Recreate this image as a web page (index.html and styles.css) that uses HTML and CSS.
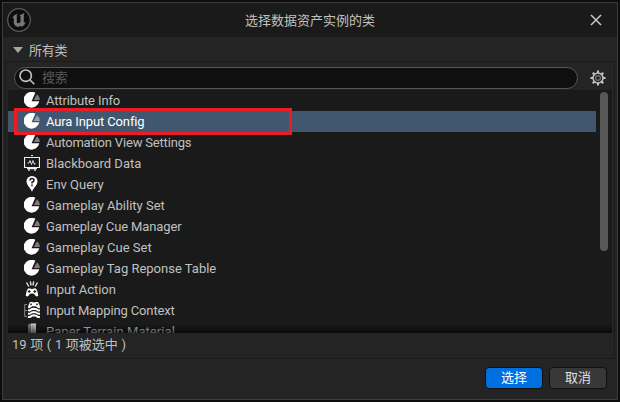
FILE: index.html
```html
<!DOCTYPE html>
<html lang="zh-CN">
<head>
<meta charset="utf-8">
<title>选择数据资产实例的类</title>
<link rel="stylesheet" href="styles.css">
</head>
<body>
<svg class="defs" width="0" height="0">
  <symbol id="pie" viewBox="0 0 16 16">
    <path d="M11.300 .8A7.900 7.900 0 1 0 15.300 9.300H7.600Z" fill="#fff"/>
    <path d="M13 2.300Q15.500 4.300 15.900 8H9.800Z" fill="currentColor"/>
  </symbol>
</svg>
<div class="window">
  <header class="titlebar">
    <svg class="logo" viewBox="0 0 24 24">
      <circle cx="12" cy="12" r="11.300" fill="#0c0c0c" stroke="#5c5c5c" stroke-width="1.200"/>
      <path d="M5 10Q7 6.500 10.500 5.500L9.800 7V14.500Q10.500 15.500 12 15L13.500 14V8.200L12.500 7.300Q15 6.500 17.500 4.800L16.800 7V14L18 14.700L19 14Q17.500 17.500 14.500 19L13.300 17.700L11.500 19Q7.500 18.500 6.800 15V10Q6.300 9.300 5 10Z" fill="#777"/>
    </svg>
    <h1 class="title">选择数据资产实例的类</h1>
    <svg class="close" viewBox="0 0 12 12"><path d="M1 1L11 11M11 1L1 11" stroke="#c8c8c8" stroke-width="1.500"/></svg>
  </header>
  <div class="section">
    <svg class="arrow" viewBox="0 0 10 6"><path d="M0 0H10L5 6Z" fill="#a5a5a5"/></svg>
    <span>所有类</span>
  </div>
  <main class="panel">
    <div class="toolbar">
      <div class="search">
        <svg class="lens" viewBox="0 0 16 16" fill="none" stroke="#c4c4c4" stroke-width="1.600"><circle cx="6.700" cy="6.700" r="5.700"/><path d="M10.800 10.800L15.300 15.300"/></svg>
        <span>搜索</span>
      </div>
      <svg class="gear" viewBox="0 0 16 16" fill="none" stroke="#c4c4c4">
        <circle cx="8" cy="8" r="5" stroke-width="1.500"/>
        <circle cx="8" cy="8" r="2.400" stroke="#777" stroke-width="1.200"/>
        <path d="M8 .5V3M8 13V15.500M.5 8H3M13 8H15.500M2.700 2.700L4.500 4.500M11.500 11.500L13.300 13.300M2.700 13.300L4.500 11.500M11.500 4.500L13.300 2.700" stroke-width="2"/>
      </svg>
    </div>
    <div class="list">
      <div class="row"><svg class="icon"><use href="#pie"/></svg><span class="tight">Attribute Info</span></div>
      <div class="row selected"><svg class="icon"><use href="#pie"/></svg><span class="tight">Aura Input Config</span></div>
      <div class="row"><svg class="icon"><use href="#pie"/></svg><span class="tighter">Automation View Settings</span></div>
      <div class="row"><svg class="icon" viewBox="0 0 16 16" fill="none" stroke="#eee"><path d="M7 .5H9" stroke-width="1"/><path d="M.5 2.500H15.500V12.500H.5Z" stroke-width="1.200"/><path d="M3.500 8H5L6 5.500L7.500 9.500L9 5.500L10.500 9.500L11.300 8" stroke-width=".9"/><path d="M3 13.500H13M5 13V16M11 13V16" stroke-width="1.300"/></svg><span>Blackboard Data</span></div>
      <div class="row"><svg class="icon" viewBox="0 0 16 16"><path d="M8 0A5.500 5.500 0 0 0 2.500 5.500C2.500 9.200 7 12 8 16C9 12 13.500 9.200 13.500 5.500A5.500 5.500 0 0 0 8 0Z" fill="#fff"/><path d="M6 4.500Q6 2.600 8 2.600T10 4.400Q10 5.400 8 6.300V7.500M8 8.600V10.200" fill="none" stroke="#1a1a1a" stroke-width="1.500"/></svg><span>Env Query</span></div>
      <div class="row"><svg class="icon"><use href="#pie"/></svg><span>Gameplay Ability Set</span></div>
      <div class="row"><svg class="icon"><use href="#pie"/></svg><span class="tight">Gameplay Cue Manager</span></div>
      <div class="row"><svg class="icon"><use href="#pie"/></svg><span>Gameplay Cue Set</span></div>
      <div class="row"><svg class="icon"><use href="#pie"/></svg><span>Gameplay Tag Reponse Table</span></div>
      <div class="row"><svg class="icon" viewBox="0 0 16 16"><path d="M2.500 1.500L4.800 5.500M6.300 .3L7 4.500M9.700 .3L9 4.500M13.500 1.500L11.200 5.500" stroke="#ddd" stroke-width="1.500"/><path d="M4 7.500H6.500L8 8.200L9.500 7.500H12Q13.800 9.500 14.300 14.500Q12.500 16.500 11 14L9.500 12.500H6.500L5 14Q3.500 16.500 1.700 14.500Q2.200 9.500 4 7.500Z" fill="#fff"/><path d="M3.800 10.500H6.600M5.200 9.100V11.900M9.400 10.500H12.200M10.800 9.100V11.900" stroke="#1a1a1a" stroke-width="1.100"/></svg><span>Input Action</span></div>
      <div class="row"><svg class="icon" viewBox="0 0 16 16"><path d="M3 2.500H.7V14.500H3M.7 8.500H3" fill="none" stroke="#888"/><path d="M6 0H8L10 .6L12 0H14Q15.500 2 16 6Q14.500 7 13 5L11.500 4.300H8.500L7 5Q5.500 7 4 6Q4.500 2 6 0Z" fill="#fff"/><path d="M6 2.300H8M7 1.300V3.300M12 2.300H14M13 1.300V3.300" stroke="#1a1a1a" stroke-width=".8"/><path d="M4 8.200Q6 9 7.500 7.200L10 6.700L12.500 7.200Q14 9 16 8.200M4 11.500Q6 12.300 7.500 10.500L10 10L12.500 10.500Q14 12.300 16 11.500M4 14.800Q6 15.600 7.500 13.800L10 13.300L12.500 13.800Q14 15.600 16 14.800" fill="none" stroke="#fff" stroke-width="1.900"/></svg><span class="tight">Input Mapping Context</span></div>
      <div class="row"><svg class="icon" viewBox="0 0 16 16"><path d="M4 1.500L7 .5V14H4Z" fill="#777"/><path d="M7 .5H12V14H7Z" fill="#c8c8c8"/><path d="M9 2V14" stroke="#999"/></svg><span class="loose">Paper Terrain Material</span></div>
      <div class="scrollbar"></div>
      <div class="fade"></div>
      <div class="highlight"></div>
    </div>
    <div class="status">19 项 ( 1 项被选中 )</div>
  </main>
  <footer class="actions">
    <button class="button primary">选择</button>
    <button class="button">取消</button>
  </footer>
</div>
</body>
</html>
```

FILE: styles.css
```css
* { box-sizing: border-box; }
body {
  margin: 0;
  width: 620px;
  height: 402px;
  padding: 2px;
  overflow: hidden;
  background: #0c0c0c;
  color: #c0c0c0;
  font: 13px/21px Roboto, "Noto Sans CJK SC", sans-serif;
}
.defs { position: absolute; }
.window {
  width: 616px;
  height: 398px;
  display: flex;
  flex-direction: column;
  background: #242424;
  border: 1px solid #3c3c3c;
}
.titlebar {
  height: 34px;
  flex: none;
  display: flex;
  align-items: center;
  justify-content: space-between;
  padding: 0 15px 0 4px;
  background: #1a1a1a;
}
.logo { width: 24px; height: 24px; margin-top: -1px; }
.title { margin: 0 0 0 -1px; font-size: 13px; font-weight: 400; }
.close { width: 12px; height: 12px; }
.section {
  height: 24px;
  flex: none;
  display: flex;
  align-items: center;
  gap: 6px;
  padding: 2px 10px 0;
  letter-spacing: -.3px;
}
.arrow { width: 10px; height: 6px; }
.panel {
  height: 298px;
  flex: none;
  margin: 0 2px;
  border: 1px solid #1a1a1a;
  padding: 0 2px;
}
.toolbar {
  height: 28px;
  display: flex;
  align-items: center;
  padding: 3px 6px 0;
  gap: 12px;
}
.search {
  width: 564px;
  height: 22px;
  display: flex;
  align-items: center;
  gap: 7px;
  padding-left: 4px;
  background: #0f0f0f;
  border: 1px solid #555;
  border-radius: 11px;
  color: #595959;
}
.search span { margin-top: -1px; letter-spacing: -.3px; }
.lens { width: 16px; height: 16px; margin-top: -1px; }
.gear { width: 16px; height: 16px; }
.list {
  position: relative;
  height: 243px;
  overflow: hidden;
  background: #1a1a1a;
}
.row {
  height: 21px;
  display: flex;
  align-items: center;
  gap: 6px;
  padding-left: 16px;
  color: #c0c0c0;
}
.row.selected {
  width: 588px;
  background: #40576f;
  color: #fff;
}
.tight { letter-spacing: -.13px; }
.tighter { letter-spacing: -.18px; }
.loose { letter-spacing: .07px; }
.icon { width: 16px; height: 16px; margin-bottom: 1px; color: #7c7c7c; }
.selected .icon { color: #91a0b0; }
.scrollbar {
  position: absolute;
  top: 2px;
  right: 4px;
  width: 8px;
  height: 159px;
  border-radius: 4px;
  background: #575757;
}
.fade {
  position: absolute;
  left: 0;
  right: 0;
  bottom: 0;
  height: 9px;
  background: linear-gradient(transparent, rgba(0, 0, 0, .6));
}
.highlight {
  position: absolute;
  left: 6px;
  top: 18px;
  width: 278px;
  height: 27px;
  border: 3px solid #ed1c24;
}
.status { height: 24px; padding: 1px 4px; white-space: nowrap; word-spacing: .4px; }
.actions {
  display: flex;
  justify-content: flex-end;
  gap: 6px;
  padding: 8px 10px 0;
}
.button {
  width: 58px;
  height: 22px;
  padding: 0;
  border: 1px solid #101010;
  border-radius: 4px;
  background: #383838;
  color: #e0e0e0;
  font: 13px/20px Roboto, "Noto Sans CJK SC", sans-serif;
}
.primary { background: #0070e0; color: #fff; }
```
